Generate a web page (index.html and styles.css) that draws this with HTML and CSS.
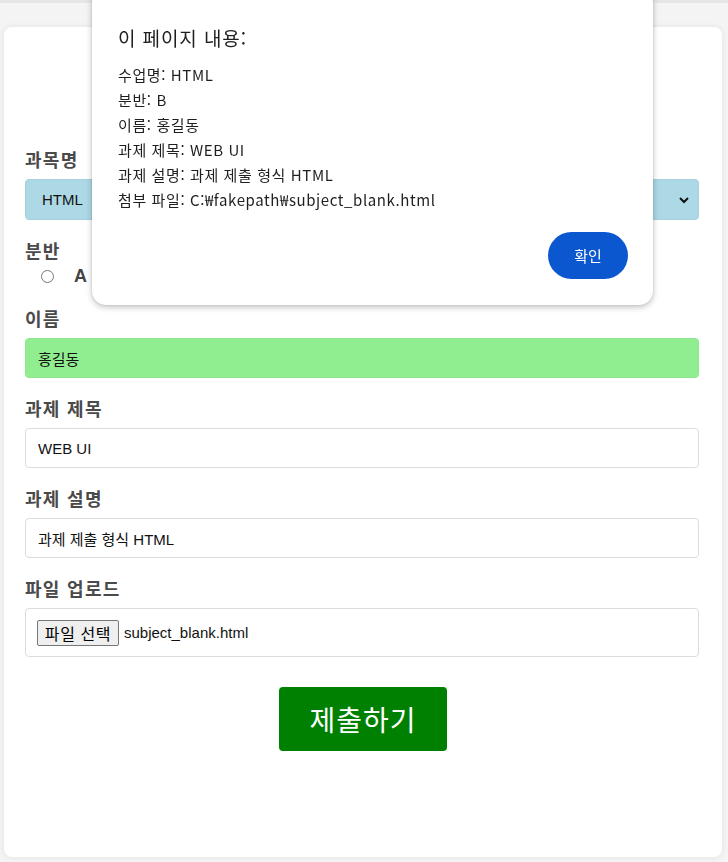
FILE: index.html
```html
<!DOCTYPE html>
<html lang="ko">
<head>
<meta charset="utf-8">
<title>과제 제출</title>
<link rel="stylesheet" href="styles.css">
</head>
<body>
<div class="topline"></div>
<main class="card">
  <h2 class="title">과제 제출</h2>
  <div class="field">
    <label class="lbl">과목명</label>
    <div class="select-wrap">
      <select class="select">
        <option>HTML</option>
      </select>
      <svg class="chev" width="12" height="8" viewBox="0 0 12 8"><path d="M2 2 L6 6 L10 2" fill="none" stroke="#111" stroke-width="2"/></svg>
    </div>
  </div>
  <div class="field">
    <label class="lbl">분반</label>
    <div class="radios">
      <label class="ropt"><input type="radio" name="ban"> A</label>
      <label class="ropt"><input type="radio" name="ban" checked> B</label>
    </div>
  </div>
  <div class="field">
    <label class="lbl">이름</label>
    <input class="inp inp-green" type="text" value="홍길동">
  </div>
  <div class="field">
    <label class="lbl">과제 제목</label>
    <input class="inp" type="text" value="WEB UI">
  </div>
  <div class="field">
    <label class="lbl">과제 설명</label>
    <input class="inp" type="text" value="과제 제출 형식 HTML">
  </div>
  <div class="field">
    <label class="lbl">파일 업로드</label>
    <div class="filebox">
      <span class="filebtn">파일 선택</span>
      <span class="filename">subject_blank.html</span>
    </div>
  </div>
  <div class="actions">
    <button class="submit" type="button">제출하기</button>
  </div>
</main>

<div class="dialog">
  <div class="dlg-title">이 페이지 내용:</div>
  <div class="dlg-body">
    <div>수업명: HTML</div>
    <div>분반: B</div>
    <div>이름: 홍길동</div>
    <div>과제 제목: WEB UI</div>
    <div>과제 설명: 과제 제출 형식 HTML</div>
    <div>첨부 파일: C:₩fakepath₩subject_blank.html</div>
  </div>
  <div class="dlg-actions">
    <button class="ok" type="button">확인</button>
  </div>
</div>
</body>
</html>
```

FILE: styles.css
```css
* { box-sizing: border-box; }
html, body { margin: 0; padding: 0; }
body {
  background: #f4f4f4;
  font-family: "Liberation Sans", "Noto Sans CJK KR", sans-serif;
  height: 862px;
  overflow: hidden;
}
.topline {
  height: 3px;
  background: #e6e6e6;
}
.card {
  margin: 24px 6px 0 4px;
  background: #fff;
  border-radius: 8px;
  box-shadow: 0 0 6px rgba(0,0,0,0.08);
  padding: 20px 23px 0 21px;
  height: 830px;
}
.title {
  margin: 0;
  height: 102px;
  text-align: center;
  font-size: 26px;
  line-height: 70px;
  color: #333;
  font-family: "Noto Sans CJK KR", sans-serif;
}
.field { margin-bottom: 20px; }
.lbl {
  display: block;
  font-family: "Noto Sans CJK KR", sans-serif;
  font-weight: bold;
  font-size: 18px;
  letter-spacing: 1.3px;
  line-height: 20px;
  color: #4a4a4a;
  margin-bottom: 10px;
}
.select-wrap { position: relative; }
.select {
  width: 100%;
  height: 41px;
  appearance: none;
  -webkit-appearance: none;
  background: #add8e6;
  border: 1px solid #a6d0de;
  border-radius: 4px;
  padding: 0 16px;
  font-family: "Liberation Sans", "Noto Sans CJK KR", sans-serif;
  font-size: 15px;
  color: #111;
}
.chev {
  position: absolute;
  right: 9px;
  top: 17px;
  pointer-events: none;
}
.radios {
  display: flex;
  align-items: flex-start;
  height: 18px;
  padding-left: 16px;
}
.ropt {
  display: flex;
  align-items: center;
  height: 13px;
  line-height: 13px;
  font-family: "Liberation Sans", sans-serif;
  font-weight: bold;
  font-size: 18px;
  color: #444;
  margin-right: 14px;
}
.ropt input {
  margin: 0 20px 0 0;
  width: 13px;
  height: 13px;
}
.inp {
  display: block;
  width: 100%;
  height: 40px;
  border: 1px solid #dcdcdc;
  border-radius: 4px;
  padding: 0 12px;
  font-family: "Liberation Sans", "Noto Sans CJK KR", sans-serif;
  font-size: 15px;
  color: #111;
  background: #fff;
}
.inp-green { background: #90ee90; border-color: #8fe58f; }
.filebox {
  display: flex;
  align-items: center;
  height: 49px;
  border: 1px solid #dcdcdc;
  border-radius: 4px;
  padding: 0 11px;
  font-size: 15px;
  color: #111;
}
.filebtn {
  display: inline-flex;
  align-items: center;
  justify-content: center;
  width: 82px;
  height: 26px;
  background: #efefef;
  border: 1px solid #767676;
  border-radius: 2px;
  font-family: "Noto Sans CJK KR", sans-serif;
  font-size: 16px;
  letter-spacing: 0.6px;
  color: #000;
  margin-right: 5px;
}
.filename { font-family: "Liberation Sans", sans-serif; font-size: 15px; }
.actions {
  display: flex;
  justify-content: center;
  padding-top: 10px;
}
.submit {
  width: 168px;
  height: 64px;
  background: #008000;
  color: #fff;
  border: none;
  border-radius: 4px;
  font-family: "Noto Sans CJK KR", sans-serif;
  font-size: 28px;
  letter-spacing: 1px;
  margin-left: 2px;
}
.dialog {
  position: fixed;
  left: 92px;
  top: -12px;
  width: 561px;
  height: 317px;
  background: #fff;
  border-radius: 14px;
  box-shadow: 0 2px 6px rgba(0,0,0,0.25), 0 0 2px rgba(0,0,0,0.15);
  padding: 38px 25px 0 26px;
  font-family: "Noto Sans CJK KR", sans-serif;
  color: #1f1f1f;
}
.dlg-title {
  font-size: 19px;
  letter-spacing: 0.9px;
  line-height: 24px;
  margin-bottom: 12px;
}
.dlg-body {
  font-size: 15px;
  letter-spacing: 0.6px;
  line-height: 25px;
}
.dlg-actions {
  display: flex;
  justify-content: flex-end;
  margin-top: 20px;
}
.ok {
  width: 80px;
  height: 47px;
  border: none;
  border-radius: 24px;
  background: #0b57d0;
  color: #fff;
  font-family: "Noto Sans CJK KR", sans-serif;
  font-size: 15px;
}
```
